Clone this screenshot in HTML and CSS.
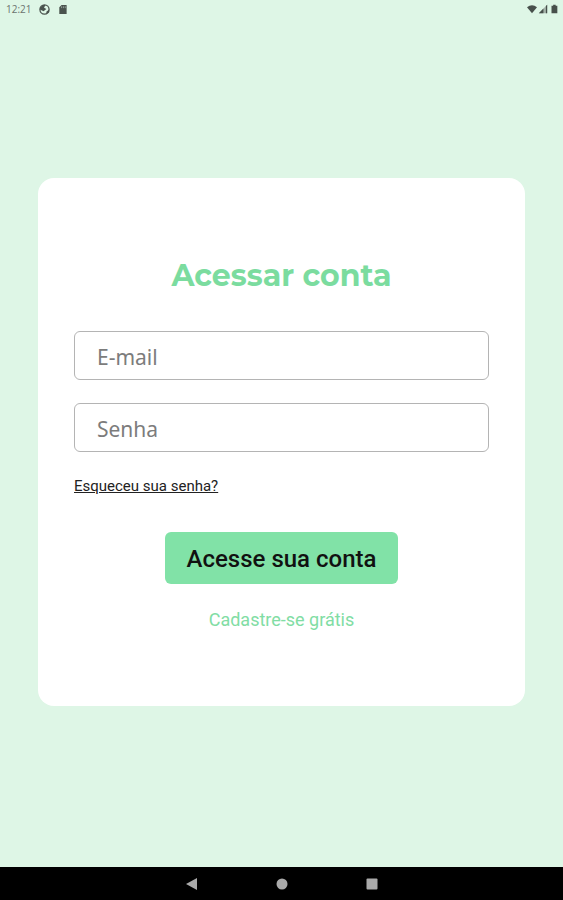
FILE: index.html
```html
<!DOCTYPE html>
<html lang="pt-BR">
<head>
<meta charset="utf-8">
<meta name="viewport" content="width=device-width, initial-scale=1">
<title>Acessar conta</title>
<link rel="stylesheet" href="styles.css">
</head>
<body>
<header class="status">
  <div class="status-group">
    <span class="clock">12:21</span>
    <svg class="icon" viewBox="0 0 12 12" aria-hidden="true"><circle cx="6" cy="6" r="5" fill="none" stroke="#4a534e" stroke-width="1.4"/><path d="M1 6V4l3-3h3L5.500 4 8 5.500 5 8zM8 8.500 11 6v3L8 11z" fill="#4a534e"/></svg>
    <svg class="icon" viewBox="0 0 12 12" aria-hidden="true"><path d="M5 1h5.500v10h-8V3.500z" fill="#4a534e"/><path d="M5 2.500v2M7 2.500v2M9 2.500v2" stroke="#a9b9af" stroke-width=".8"/></svg>
  </div>
  <div class="status-group signals">
    <svg class="icon" viewBox="0 0 12 12" aria-hidden="true"><path d="M0 4q6-5 12 0L6 11z" fill="#47504b"/></svg>
    <svg class="icon" viewBox="0 0 12 12" aria-hidden="true"><path d="M1 11 11 1v10z" fill="#a5b3aa"/><path d="M1 11 6.500 5.500V11zM9.500 2.500 11 1v10H9.500z" fill="#47504b"/></svg>
    <svg class="icon" viewBox="0 0 12 12" aria-hidden="true"><path d="M3 2h2V1h3v1h2v9H3z" fill="#47504b"/></svg>
  </div>
</header>
<main class="screen">
  <form class="card">
    <h1 class="title">Acessar conta</h1>
    <input class="field" type="email" placeholder="E-mail" aria-label="E-mail">
    <input class="field" type="password" placeholder="Senha" aria-label="Senha">
    <a class="forgot" href="#">Esqueceu sua senha?</a>
    <button class="submit" type="button">Acesse sua conta</button>
    <a class="signup" href="#">Cadastre-se grátis</a>
  </form>
</main>
<nav class="navbar" aria-label="Sistema">
  <button class="nav-button" type="button" aria-label="Voltar"><svg viewBox="0 0 12 12"><path d="M11 0v12L0 6z" fill="#aaa"/></svg></button>
  <button class="nav-button" type="button" aria-label="Início"><svg viewBox="0 0 12 12"><circle cx="6" cy="6" r="5.500" fill="#aaa"/></svg></button>
  <button class="nav-button" type="button" aria-label="Recentes"><svg viewBox="0 0 12 12"><rect x=".5" y=".5" width="11" height="11" rx="1" fill="#aaa"/></svg></button>
</nav>
</body>
</html>
```

FILE: styles.css
```css
* { box-sizing: border-box; }
body {
  margin: 0;
  min-height: 100vh;
  display: flex;
  flex-direction: column;
  background: #def6e6;
  font-family: Roboto, sans-serif;
}
.status {
  height: 18px;
  padding: 0 4px 0 6px;
  display: flex;
  align-items: center;
  justify-content: space-between;
}
.status-group { display: flex; align-items: center; gap: 7px; }
.signals { gap: 1px; }
.clock { font: 10px/18px "Open Sans", sans-serif; color: #6b746f; }
.icon { width: 11px; height: 11px; display: block; }
.signals .icon { width: 10px; height: 10px; }
.screen {
  flex: 1;
  display: flex;
  align-items: center;
  padding: 0 38px 1px;
}
.card {
  width: 100%;
  padding: 76px 36px 74px;
  display: flex;
  flex-direction: column;
  align-items: center;
  background: #fff;
  border-radius: 16px;
}
.title {
  margin: 0 0 33px;
  font: 700 30px/44px Montserrat, Inter, sans-serif;
  color: #7bdc9f;
}
.field {
  width: 100%;
  height: 49px;
  margin: 0 0 23px;
  padding: 2px 22px 0;
  border: 1px solid #b4b4b4;
  border-radius: 6px;
  background: #fff;
  font: 21px/28px "Noto Sans", sans-serif;
  color: #333;
}
.field::placeholder { color: #7c7c7c; opacity: 1; }
.forgot {
  align-self: flex-start;
  font-size: 15px;
  line-height: 22px;
  color: #222;
}
.submit {
  height: 52px;
  margin: 35px 0 24px;
  padding: 2px 22px 0;
  border: 0;
  border-radius: 6px;
  background: #81e2a7;
  font: 500 24px/32px Roboto, sans-serif;
  color: #111;
}
.signup {
  font-size: 18px;
  line-height: 24px;
  color: #81dda4;
  text-decoration: none;
}
.navbar {
  height: 33px;
  display: flex;
  align-items: center;
  justify-content: center;
  gap: 78px;
  background: #000;
}
.nav-button { width: 12px; height: 12px; padding: 0; border: 0; background: none; }
.nav-button svg { display: block; width: 12px; height: 12px; }
```
